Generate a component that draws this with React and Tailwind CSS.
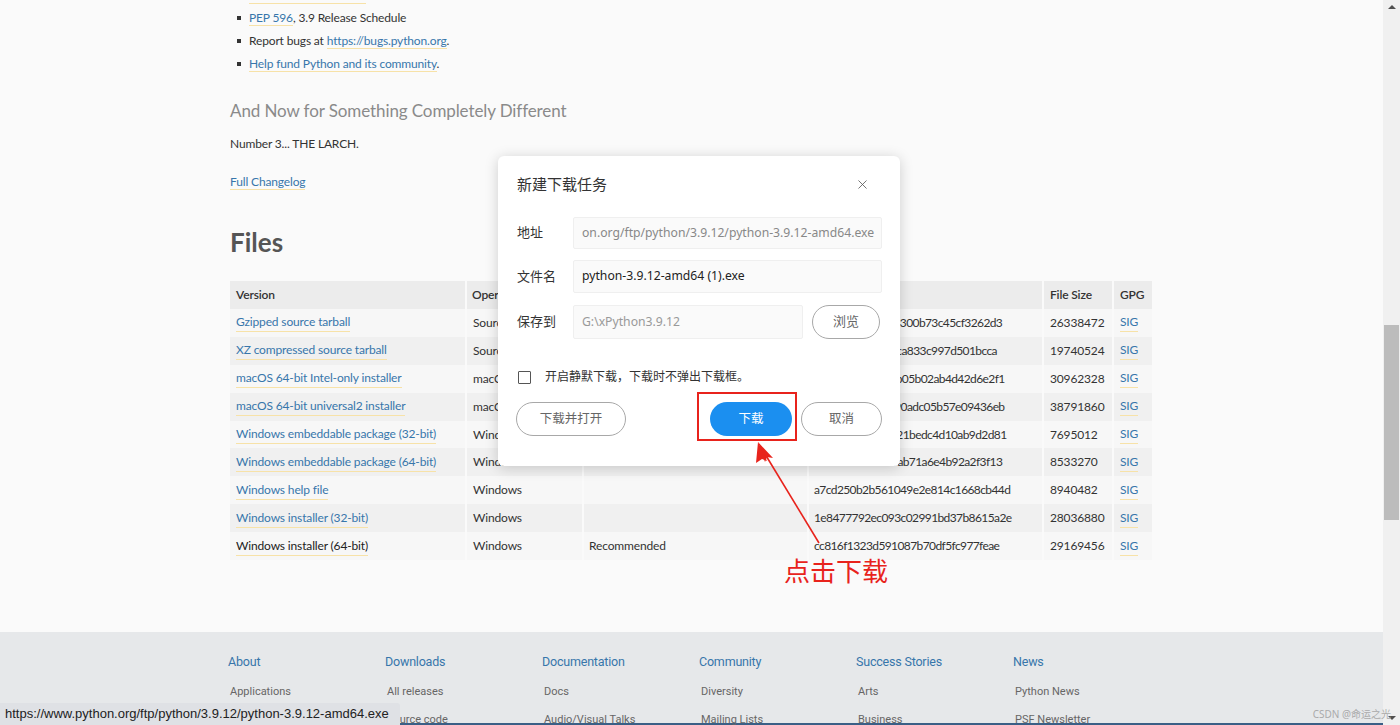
import React from "react";
import { X } from "lucide-react";

const body = { fontFamily: "Lato, 'Noto Sans', sans-serif" };
const cjk = { fontFamily: "'Noto Sans', 'Noto Sans CJK SC', sans-serif" };
const foot = { fontFamily: "Roboto, 'Noto Sans', sans-serif" };

const rows = [
  { v: "Gzipped source tarball", os: "Source release", d: "", md5: "abc7f7f83ea8614300b73c45cf3262d3", size: "26338472" },
  { v: "XZ compressed source tarball", os: "Source release", d: "", md5: "4b5fda03e3fbfceca833c997d501bcca", size: "19740524" },
  { v: "macOS 64-bit Intel-only installer", os: "macOS", d: "for macOS 10.9 and later", md5: "6ab7f5da7e6d1cb05b02ab4d42d6e2f1", size: "30962328" },
  { v: "macOS 64-bit universal2 installer", os: "macOS", d: "for macOS 10.9 and later", md5: "b7f6a3c8e2d1f490adc05b57e09436eb", size: "38791860" },
  { v: "Windows embeddable package (32-bit)", os: "Windows", d: "", md5: "f3c1e8a9b2d74e21bedc4d10ab9d2d81", size: "7695012" },
  { v: "Windows embeddable package (64-bit)", os: "Windows", d: "", md5: "5b16e3ca71cc29ab71a6e4b92a2f3f13", size: "8533270" },
  { v: "Windows help file", os: "Windows", d: "", md5: "a7cd250b2b561049e2e814c1668cb44d", size: "8940482" },
  { v: "Windows installer (32-bit)", os: "Windows", d: "", md5: "1e8477792ec093c02991bd37b8615a2e", size: "28036880" },
  { v: "Windows installer (64-bit)", os: "Windows", d: "Recommended", md5: "cc816f1323d591087b70df5fc977feae", size: "29169456", dark: true },
];

function L({ children, dark }) {
  return (
    <a className={`border-b border-[#f7e2a8] ${dark ? "text-[#222]" : "text-[#3776ab]"}`}>{children}</a>
  );
}

const footerCols = [
  ["About", "Applications", "Quotes"],
  ["Downloads", "All releases", "Source code"],
  ["Documentation", "Docs", "Audio/Visual Talks"],
  ["Community", "Diversity", "Mailing Lists"],
  ["Success Stories", "Arts", "Business"],
  ["News", "Python News", "PSF Newsletter"],
];

const cell = "flex items-center overflow-hidden whitespace-nowrap border-l-2 border-[#fafafa] pl-[5px]";

export default function App() {
  return (
    <div className="relative flex h-[725px] w-[1400px] overflow-hidden bg-[#fafafa]">
      <div className="flex flex-1 flex-col">
        <main className="flex-1 pl-[230px] text-[12px] tracking-[-0.15px] text-[#333]" style={body}>
          <ul className="mt-[-17px]">
            {[
              <L key="a">Online Documentation</L>,
              <span key="b"><L>PEP 596</L>, 3.9 Release Schedule</span>,
              <span key="c">Report bugs at <L>https://bugs.python.org</L>.</span>,
              <span key="d"><L>Help fund Python and its community</L>.</span>,
            ].map((c, i) => (
              <li key={i} className="flex h-[23px] items-center">
                <span className="ml-[7px] mr-[8px] h-[4px] w-[4px] bg-[#333]" />
                {c}
              </li>
            ))}
          </ul>
          <h2 className="mt-[24px] text-[17px] leading-[24px] tracking-[-0.1px] text-[#8a8a8a]">And Now for Something Completely Different</h2>
          <p className="mt-[11px] leading-[20px]">Number 3... THE LARCH.</p>
          <p className="mt-[18px] leading-[20px]"><L>Full Changelog</L></p>
          <h1 className="mt-[34px] text-[26px] font-bold leading-[32px] tracking-normal text-[#555]">Files</h1>
          <div className="mt-[23px] grid w-[922px] grid-cols-[235px_117px_225px_235px_70px_40px]">
            <div className="flex h-[28px] items-center bg-[#ececec] pl-[6px] font-semibold">Version</div>
            <div className={`${cell} h-[28px] bg-[#ececec] font-semibold`}>Operating System</div>
            <div className={`${cell} h-[28px] bg-[#ececec] font-semibold`}>Description</div>
            <div className={`${cell} h-[28px] bg-[#ececec] font-semibold`}>MD5 Sum</div>
            <div className={`${cell} h-[28px] bg-[#ececec] pl-[6px] font-semibold`}>File Size</div>
            <div className={`${cell} h-[28px] bg-[#ececec] pl-[6px] font-semibold`}>GPG</div>
            {rows.map((r, i) => {
              const bg = i % 2 === 0 ? "bg-[#f7f7f7]" : "bg-[#f0f0f0]";
              return (
                <React.Fragment key={i}>
                  <div className={`flex h-[27.9px] items-center whitespace-nowrap pl-[6px] ${bg}`}><L dark={r.dark}>{r.v}</L></div>
                  <div className={`${cell} h-[27.9px] pl-[6px] ${bg}`}>{r.os}</div>
                  <div className={`${cell} h-[27.9px] ${bg}`}>{r.d}</div>
                  <div className={`${cell} h-[27.9px] tracking-[-0.6px] ${bg}`}>{r.md5}</div>
                  <div className={`${cell} h-[27.9px] pl-[6px] ${bg}`}>{r.size}</div>
                  <div className={`${cell} h-[27.9px] pl-[6px] ${bg}`}><L>SIG</L></div>
                </React.Fragment>
              );
            })}
          </div>
        </main>
        <footer className="h-[93px] border-b-2 border-[#3a5f86] bg-[#e6e8ea] pl-[228px] pt-[21px]" style={foot}>
          <div className="flex">
            {footerCols.map((c, i) => (
              <div key={i} className="w-[157px] shrink-0">
                <div className="text-[12.5px] leading-[18px] tracking-[-0.2px] text-[#3776ab]">{c[0]}</div>
                <div className="mt-[12px] pl-[2px] text-[11px] leading-[17px] text-[#666]">{c[1]}</div>
                <div className="mt-[11px] pl-[2px] text-[11px] leading-[17px] text-[#666]">{c[2]}</div>
              </div>
            ))}
          </div>
        </footer>
      </div>

      {/* scrollbar */}
      <div className="flex w-[17px] flex-col items-center bg-[#f0f0f0]">
        <div className="mt-[5px] h-0 w-0 border-x-[4px] border-b-[4px] border-x-transparent border-b-[#505050]" />
        <div className="mt-[316px] h-[195px] w-[15px] bg-[#bcbcbc]" />
        <div className="mt-auto mb-[5px] h-0 w-0 border-x-[4px] border-t-[4px] border-x-transparent border-t-[#505050]" />
      </div>

      {/* dialog */}
      <div className="absolute left-[498px] top-[156px] flex h-[310px] w-[402px] flex-col rounded-[6px] bg-white px-[18px] pt-[18px] shadow-[0_2px_14px_rgba(0,0,0,0.18)]" style={cjk}>
        <div className="flex h-[20px] items-center justify-between pl-[1px]">
          <span className="text-[15px] text-[#333]">新建下载任务</span>
          <X size={15} strokeWidth={1.3} className="mr-[12px] text-[#555]" />
        </div>
        <div className="mt-[23px] flex h-[32px] items-center pl-[1px]">
          <span className="w-[56px] text-[13px] text-[#333]">地址</span>
          <div className="flex h-full flex-1 items-center overflow-hidden rounded-[2px] border border-[#efefef] bg-[#fafafa] pl-[8px] text-[12.2px] whitespace-nowrap text-[#888]">on.org/ftp/python/3.9.12/python-3.9.12-amd64.exe</div>
        </div>
        <div className="mt-[11px] flex h-[33px] items-center pl-[1px]">
          <span className="w-[56px] text-[13px] text-[#333]">文件名</span>
          <div className="flex h-full flex-1 items-center rounded-[2px] border border-[#efefef] bg-[#fafafa] pl-[8px] text-[12.2px] text-[#222]">python-3.9.12-amd64 (1).exe</div>
        </div>
        <div className="mt-[12px] flex h-[34px] items-center pl-[1px]">
          <span className="w-[56px] text-[13px] text-[#333]">保存到</span>
          <div className="flex h-full w-[230px] items-center rounded-[2px] border border-[#efefef] bg-[#fafafa] pl-[8px] text-[12.2px] text-[#999]">G:\xPython3.9.12</div>
          <div className="ml-[9px] flex h-full w-[68px] items-center justify-center rounded-full border border-[#a8a8a8] text-[13px] text-[#666]">浏览</div>
        </div>
        <div className="mt-[28px] flex h-[20px] items-center pl-[2px]">
          <span className="h-[13px] w-[13px] rounded-[1px] border-[1.5px] border-[#555]" />
          <span className="ml-[14px] text-[12px] text-[#333]">开启静默下载，下载时不弹出下载框。</span>
        </div>
        <div className="mt-[15px] flex h-[34px] items-center">
          <div className="flex h-full w-[110px] items-center justify-center rounded-full border border-[#a8a8a8] text-[12.5px] text-[#666]">下载并打开</div>
          <div className="ml-auto flex h-full w-[82px] items-center justify-center rounded-full bg-[#1b8ff0] text-[12.5px] text-white">下载</div>
          <div className="ml-[9px] flex h-full w-[81px] items-center justify-center rounded-full border border-[#a8a8a8] text-[12.5px] text-[#666]">取消</div>
        </div>
      </div>

      {/* annotation */}
      <div className="absolute left-[697px] top-[392px] h-[49px] w-[100px] border-2 border-[#e8231c]" />
      <svg className="absolute left-[740px] top-[436px]" width="90" height="115" viewBox="0 0 90 115">
        <path d="M79 107 L25 18" stroke="#e8231c" strokeWidth="1.6" fill="none" />
        <path d="M18 6 L33 22 L27 21 L25 26 Z" fill="#e8231c" />
        <path d="M18 6 L16 27 L22 23 L27 25 Z" fill="#e8231c" />
      </svg>
      <div className="absolute left-[784px] top-[553px] text-[26px] leading-[34px] text-[#e8231c]" style={{ fontFamily: "'Noto Sans CJK SC', sans-serif" }}>点击下载</div>

      {/* status bar */}
      <div className="absolute bottom-0 left-0 flex h-[22px] w-[400px] items-center whitespace-nowrap rounded-tr-[3px] bg-[#dfe1e5] pl-[5px] text-[13px] text-[#222]" style={{ fontFamily: "'Liberation Sans', Arial, sans-serif" }}>
        https://www.python.org/ftp/python/3.9.12/python-3.9.12-amd64.exe
      </div>
      <div className="absolute bottom-[3px] right-[9px] text-[10px] text-[#aaa]" style={{ fontFamily: "'Noto Sans', 'Noto Sans CJK SC', sans-serif" }}>CSDN @命运之光</div>
    </div>
  );
}
